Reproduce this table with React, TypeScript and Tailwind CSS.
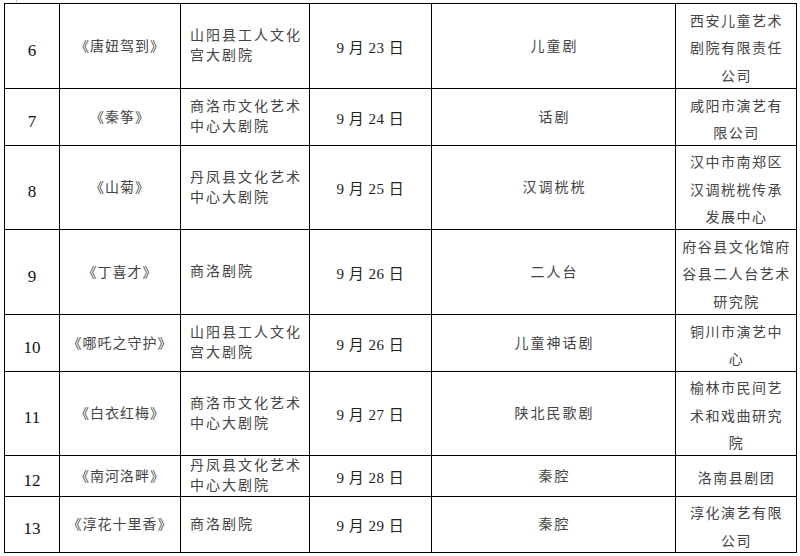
import React from 'react';

// Performance schedule table (rows 6–13)

interface Show {
  no: number;
  title: string;
  venue: string[];
  date: string;
  genre: string;
  troupe: string[];
}

const shows: Show[] = [
  { no: 6, title: '《唐妞驾到》', venue: ['山阳县工人文化', '宫大剧院'], date: '9 月 23 日', genre: '儿童剧', troupe: ['西安儿童艺术', '剧院有限责任', '公司'] },
  { no: 7, title: '《秦筝》', venue: ['商洛市文化艺术', '中心大剧院'], date: '9 月 24 日', genre: '话剧', troupe: ['咸阳市演艺有', '限公司'] },
  { no: 8, title: '《山菊》', venue: ['丹凤县文化艺术', '中心大剧院'], date: '9 月 25 日', genre: '汉调桄桄', troupe: ['汉中市南郑区', '汉调桄桄传承', '发展中心'] },
  { no: 9, title: '《丁喜才》', venue: ['商洛剧院'], date: '9 月 26 日', genre: '二人台', troupe: ['府谷县文化馆府', '谷县二人台艺术', '研究院'] },
  { no: 10, title: '《哪吒之守护》', venue: ['山阳县工人文化', '宫大剧院'], date: '9 月 26 日', genre: '儿童神话剧', troupe: ['铜川市演艺中', '心'] },
  { no: 11, title: '《白衣红梅》', venue: ['商洛市文化艺术', '中心大剧院'], date: '9 月 27 日', genre: '陕北民歌剧', troupe: ['榆林市民间艺', '术和戏曲研究', '院'] },
  { no: 12, title: '《南河洛畔》', venue: ['丹凤县文化艺术', '中心大剧院'], date: '9 月 28 日', genre: '秦腔', troupe: ['洛南县剧团'] },
  { no: 13, title: '《淳花十里香》', venue: ['商洛剧院'], date: '9 月 29 日', genre: '秦腔', troupe: ['淳化演艺有限', '公司'] },
];

const cjk = "font-['Liberation_Serif','Noto_Sans_CJK_SC',serif]";

const Cell: React.FC<{ className?: string; children: React.ReactNode }> = ({ className = '', children }) => (
  <div className={`bg-white flex items-center ${className}`}>{children}</div>
);

export default function App() {
  return (
    <div className="relative w-[800px] h-[556px] bg-white overflow-hidden">
      {/* page corner mark */}
      <div className="absolute left-[16px] top-0 w-px h-[3px] bg-[#c8c8c8]" />

      <div
        className={`ml-[4px] mt-[3px] w-fit grid grid-cols-[54px_120px_128px_121px_243px_120px] grid-rows-[84px_56px_83px_84px_56px_83px_40px_55px] gap-px bg-black p-px text-[14px] text-[#444] ${cjk}`}
      >
        {shows.map((s) => (
          <React.Fragment key={s.no}>
            <Cell className="justify-center pt-[9px]">
              <span className="font-['Liberation_Serif',serif] text-[17px] text-[#111]">{s.no}</span>
            </Cell>
            <Cell className="justify-center">
              <span className="tracking-[1px] whitespace-nowrap">{s.title}</span>
            </Cell>
            <Cell className="pl-[9px]">
              <div className="leading-[20px] tracking-[2px]">
                {s.venue.map((v) => (
                  <div key={v} className="whitespace-nowrap">{v}</div>
                ))}
              </div>
            </Cell>
            <Cell className="justify-center pt-[4px]">
              <span className="text-[15px] whitespace-pre tracking-[0.5px] text-[#222]">{s.date}</span>
            </Cell>
            <Cell className="justify-center">
              <span className="tracking-[2px] pl-[2px]">{s.genre}</span>
            </Cell>
            <Cell className="justify-center pt-[6px]">
              <div className="leading-[27.5px] tracking-[1.5px] text-center pl-[1px]">
                {s.troupe.map((t) => (
                  <div key={t} className="whitespace-nowrap">{t}</div>
                ))}
              </div>
            </Cell>
          </React.Fragment>
        ))}
      </div>
    </div>
  );
}
